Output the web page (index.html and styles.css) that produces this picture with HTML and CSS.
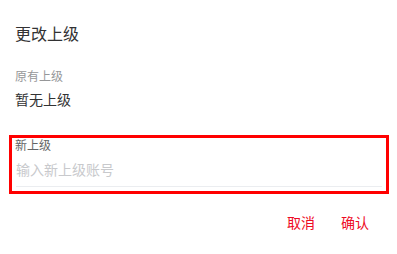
FILE: index.html
```html
<!DOCTYPE html>
<html lang="zh-CN">
<head>
<meta charset="utf-8">
<title>更改上级</title>
<link rel="stylesheet" href="styles.css">
</head>
<body>
<div class="dialog">
  <div class="title">更改上级</div>
  <div class="old">
    <div class="label">原有上级</div>
    <div class="value">暂无上级</div>
  </div>
  <div class="field">
    <div class="field-label">新上级</div>
    <div class="field-input">
      <input class="input" type="text" placeholder="输入新上级账号">
    </div>
  </div>
  <div class="actions">
    <span class="btn">取消</span>
    <span class="btn">确认</span>
  </div>
</div>
</body>
</html>
```

FILE: styles.css
```css
html, body {
  margin: 0;
  padding: 0;
  background: #fff;
}
body {
  font-family: "Noto Sans CJK SC", "Noto Sans", sans-serif;
  width: 397px;
  height: 254px;
  overflow: hidden;
}
.dialog {
  display: flex;
  flex-direction: column;
  padding: 22px 8px 0 9px;
}
.title {
  font-size: 16px;
  line-height: 22px;
  color: #323233;
  padding-left: 6px;
}
.old {
  display: flex;
  flex-direction: column;
  padding-left: 6px;
  margin-top: 23px;
}
.label {
  font-size: 12px;
  line-height: 17px;
  color: #969799;
}
.value {
  margin-top: 5px;
  font-size: 14px;
  line-height: 20px;
  color: #323233;
}
.field {
  margin-top: 26px;
  height: 53px;
  border: 3px solid #ff0000;
  padding: 0 4px 0 3px;
  display: flex;
  flex-direction: column;
}
.field-label {
  font-size: 12px;
  line-height: 14px;
  color: #646566;
}
.field-input {
  margin-top: 7px;
  padding-bottom: 7px;
  border-bottom: 1px solid #ebedf0;
  margin-left: 1px;
}
.input {
  display: block;
  width: 100%;
  box-sizing: border-box;
  border: 0;
  outline: 0;
  padding: 0;
  margin: 0;
  font-family: inherit;
  font-size: 14px;
  line-height: 20px;
  height: 20px;
  color: #323233;
  background: transparent;
}
.input::placeholder {
  color: #c8c9cc;
}
.actions {
  display: flex;
  justify-content: flex-end;
  gap: 26px;
  margin-top: 18px;
  padding-right: 20px;
}
.btn {
  font-size: 14px;
  line-height: 20px;
  color: #ee0a24;
}
```
